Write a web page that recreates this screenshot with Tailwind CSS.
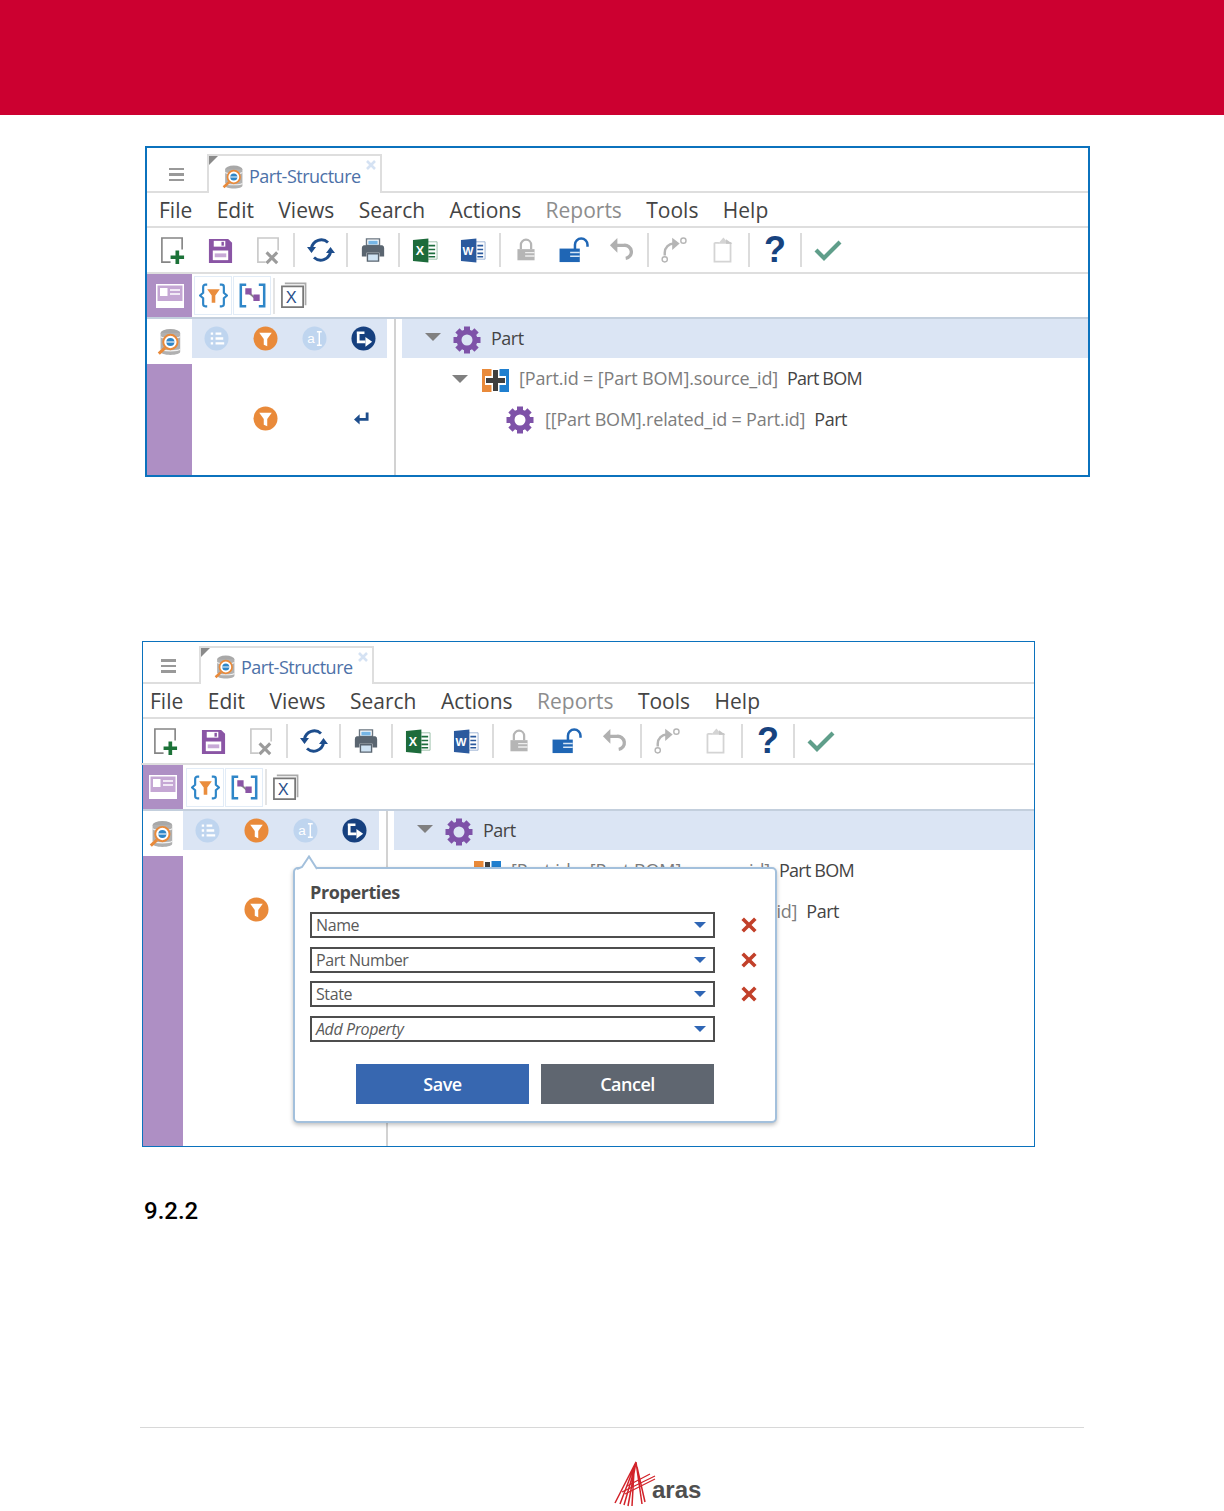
<!DOCTYPE html>
<html lang="en">
<head>
    <meta charset="UTF-8">
    <title>Part-Structure</title>
    <script src="https://cdn.jsdelivr.net/npm/@tailwindcss/browser@4"></script>
</head>
<body class="bg-white h-[1511px] overflow-hidden font-['Open_Sans',sans-serif]">
    <!-- Shared icons -->
    <svg width="0" height="0" class="absolute">
        <defs>
            <symbol id="i-new" viewBox="0 0 28 30"><path d="M12 27H3V2h21v12" fill="none" stroke="#858585" stroke-width="1.700"/><path d="M19 15v14M12 22h14" stroke="#1c7238" stroke-width="3.800"/></symbol>
            <symbol id="i-save" viewBox="0 0 28 30"><path d="M2 3h20l4 4v21H2z" fill="#8a55a5"/><path d="M7 5h12v6H7z" fill="#fff"/><path d="M15 6h2.500v4H15z" fill="#8a55a5"/><path d="M6 15h16v10H6z" fill="#fff"/><path d="M8 18h12v4H8z" fill="#c7a9d6"/></symbol>
            <symbol id="i-del" viewBox="0 0 28 30"><path d="M11 27H3V2h21v13" fill="none" stroke="#c9c9c9" stroke-width="1.700"/><path d="M12 17l11 11M23 17L12 28" stroke="#9b9b9b" stroke-width="3.200"/></symbol>
            <symbol id="i-refresh" viewBox="0 0 28 28"><path d="M4.500 12A10 10 0 0 1 21 6.500" fill="none" stroke="#1d4d8c" stroke-width="3"/><path d="M23.500 16A10 10 0 0 1 7 21.500" fill="none" stroke="#1d4d8c" stroke-width="3"/><path d="M0 11h9l-4.500 6zM19 17h9l-4.500-6z" fill="#1d4d8c"/></symbol>
            <symbol id="i-print" viewBox="0 0 28 28"><path d="M7 2h14v7H7z" fill="#fff" stroke="#6a7580" stroke-width="1.500"/><path d="M9 4h10v4H9z" fill="#76b6e6"/><path d="M4 9h20a3 3 0 0 1 2 3v9h-5v-4H7v4H2v-9a3 3 0 0 1 2-3z" fill="#5a6570"/><path d="M8 18h12v8H8z" fill="#cfe3f3" stroke="#5a6570" stroke-width="1.500"/></symbol>
            <symbol id="i-excel" viewBox="0 0 28 28"><path d="M14 5h12v18H14z" fill="#fff" stroke="#9cc0aa"/><path d="M17 9h7M17 13h7M17 17h7M17 20.500h7" stroke="#1e6e3e" stroke-width="1.700"/><path d="M1 3l16-1.500v25L1 25z" fill="#1d6b3b"/><text x="4" y="19" font-family="Liberation Sans" font-size="13" font-weight="700" fill="#fff">X</text></symbol>
            <symbol id="i-word" viewBox="0 0 28 28"><path d="M14 5h12v18H14z" fill="#fff" stroke="#9db4d4"/><path d="M18 9h6M18 13h6M18 17h6M18 20.500h6" stroke="#2b5a9e" stroke-width="1.700"/><path d="M1 3l16-1.500v25L1 25z" fill="#2b5a9e"/><text x="2.500" y="19" font-family="Liberation Sans" font-size="12" font-weight="700" fill="#fff">W</text></symbol>
            <symbol id="i-lock" viewBox="0 0 28 28"><path d="M8 13V8a6 6 0 0 1 12 0v5" fill="none" stroke="#b5b5b5" stroke-width="2.600"/><path d="M4 13h20v13H4z" fill="#b5b5b5"/><path d="M13 17h11M13 21h11" stroke="#eee" stroke-width="1.500"/></symbol>
            <symbol id="i-unlock" viewBox="0 0 32 28"><path d="M17 13V8a6.500 6.500 0 0 1 13 0v2" fill="none" stroke="#1f66b5" stroke-width="2.600"/><path d="M1 12h21v14H1z" fill="#1f66b5"/><path d="M12 16h10M12 20h10" stroke="#d6e6f6" stroke-width="1.500"/></symbol>
            <symbol id="i-undo" viewBox="0 0 28 28"><path d="M7 9h9a7 7 0 0 1 2 14" fill="none" stroke="#b0b0b0" stroke-width="3.600"/><path d="M9 1v16L1 9z" fill="#b0b0b0"/></symbol>
            <symbol id="i-redo" viewBox="0 0 32 30"><path d="M5 21v-3a10 10 0 0 1 10-10" fill="none" stroke="#b5b5b5" stroke-width="2.600"/><path d="M13 2l8 6-8 7z" fill="#b5b5b5"/><circle cx="25" cy="5" r="2.800" fill="none" stroke="#b5b5b5" stroke-width="1.500"/><circle cx="5" cy="25" r="2.800" fill="none" stroke="#b5b5b5" stroke-width="1.500"/></symbol>
            <symbol id="i-paste" viewBox="0 0 28 30"><path d="M5 7h5M18 7h5v21H5V7" fill="none" stroke="#d4d4d4" stroke-width="2"/><path d="M9 8l6-7 6 7z" fill="#d4d4d4"/><path d="M18 3l7 5h-7z" fill="#c4c4c4"/></symbol>
            <symbol id="i-check" viewBox="0 0 28 22"><path d="M2 11l8 8L26 3" fill="none" stroke="#5f9e8a" stroke-width="4.200"/></symbol>
            <symbol id="i-card" viewBox="0 0 28 26"><path d="M0 1h28v24H0z" fill="#fff"/><path d="M1.500 2.500h25V18h-25z" fill="#c5a7d4"/><path d="M4 5h7.500v8H4z" fill="#fff"/><path d="M14 7h10M14 11h10" stroke="#fff" stroke-width="1.700"/></symbol>
            <symbol id="i-filter-set" viewBox="0 0 32 30"><path d="M9 3H7a2.500 2.500 0 0 0-2.500 2.500V12L1 15l3.500 3v6.500A2.500 2.500 0 0 0 7 27h2M23 3h2a2.500 2.500 0 0 1 2.500 2.500V12l3.500 3-3.500 3v6.500A2.500 2.500 0 0 1 25 27h-2" fill="none" stroke="#2e86c8" stroke-width="2.400"/><path d="M9 8h14l-5 7v8h-4v-8z" fill="#ea8d3d"/></symbol>
            <symbol id="i-rel-set" viewBox="0 0 32 30"><path d="M9 3H3v24h6M23 3h6v24h-6" fill="none" stroke="#2e86c8" stroke-width="2.800"/><path d="M12 12l7 6" stroke="#888" stroke-width="2"/><path d="M8 7h7v7H8zM17 14h7v7h-7z" fill="#8a55a5"/></symbol>
            <symbol id="i-xml" viewBox="0 0 28 28"><path d="M5 1.500h21.500V24" fill="none" stroke="#aaa" stroke-width="1.800"/><path d="M2 4.500h22V26H2z" fill="#fff" stroke="#777" stroke-width="1.800"/><text x="6" y="22" font-family="Liberation Sans" font-size="17" fill="#2a4f8a">X</text></symbol>
            <symbol id="i-db" viewBox="0 0 28 30"><ellipse cx="15" cy="5" rx="11" ry="4.500" fill="#a8a8a8"/><path d="M4 5v21c0 2 4.500 3.500 11 3.500S26 28 26 26V5z" fill="#b0b0b0"/><path d="M4 9c2 2.500 20 2.500 22 0M4 23c2 2.500 20 2.500 22 0" stroke="#f2f2f2" stroke-width="1.400" fill="none"/><circle cx="15" cy="15" r="8" fill="#fff" stroke="#e98a3a" stroke-width="2.200"/><circle cx="15" cy="15" r="4.500" fill="#2e86c8"/><path d="M10.500 15h9" stroke="#fff" stroke-width="1.200"/><path d="M9 21.500l-7 6.500" stroke="#e98a3a" stroke-width="3.400"/></symbol>
            <symbol id="i-list" viewBox="0 0 26 26"><circle cx="13" cy="13" r="12.500" fill="#bfd5ef"/><path d="M7 8h2.500M12 8h6M7 13h2.500M12 13h8M7 18h2.500M12 18h9" stroke="#fff" stroke-width="2.400"/></symbol>
            <symbol id="i-funnel" viewBox="0 0 26 26"><circle cx="13" cy="13" r="12.500" fill="#e98a3a"/><path d="M6.500 7h13l-4.700 6.500V21l-3.600-1.500v-6z" fill="#fff"/></symbol>
            <symbol id="i-prop" viewBox="0 0 26 26"><circle cx="13" cy="13" r="12.500" fill="#bfd5ef"/><text x="5.500" y="18" font-family="Liberation Sans" font-size="14" fill="#fff">a</text><path d="M15.500 6h5M18 6v14M15.500 20h5" stroke="#fff" stroke-width="1.500"/></symbol>
            <symbol id="i-go" viewBox="0 0 26 26"><circle cx="13" cy="13" r="12.500" fill="#16407f"/><path d="M6 7h8M7.500 7v9.500H15" fill="none" stroke="#fff" stroke-width="2.800"/><path d="M15 11.500l7 5-7 5z" fill="#fff"/></symbol>
            <symbol id="i-return" viewBox="0 0 18 16"><path d="M15 1.500V9H5" fill="none" stroke="#1d4d8c" stroke-width="3"/><path d="M7 3.500V14.500L1 9z" fill="#1d4d8c"/></symbol>
            <symbol id="i-gear" viewBox="0 0 28 28">
                <circle cx="14" cy="14" r="8" fill="none" stroke="#7e52a8" stroke-width="5"/>
                <g fill="#7e52a8">
                    <rect x="11" y="0.500" width="6" height="6"/>
                    <rect x="11" y="21.500" width="6" height="6"/>
                    <rect x="0.500" y="11" width="6" height="6"/>
                    <rect x="21.500" y="11" width="6" height="6"/>
                    <rect x="11" y="0.500" width="6" height="6" transform="rotate(45 14 14)"/>
                    <rect x="11" y="21.500" width="6" height="6" transform="rotate(45 14 14)"/>
                    <rect x="0.500" y="11" width="6" height="6" transform="rotate(45 14 14)"/>
                    <rect x="21.500" y="11" width="6" height="6" transform="rotate(45 14 14)"/>
                </g>
            </symbol>
            <symbol id="i-rel" viewBox="0 0 27 23"><path d="M0 0h12v23H0z" fill="#e98a3a"/><path d="M15 0h12v23H15z" fill="#1f7fcf"/><path d="M3 7h21v9H3zM9.500 0h8v23h-8z" fill="#fff"/><path d="M4 9h19v5H4zM11 1h5v21h-5z" fill="#3f3f3f"/></symbol>
            <symbol id="i-x" viewBox="0 0 20 20"><path d="M3 3l14 14M17 3L3 17" stroke="#c2402a" stroke-width="4"/></symbol>
        </defs>
    </svg>

    <!-- Red header -->
    <div class="h-[115px] bg-[#cc0030]"></div>

    <!-- Panel 1 -->
    <div class="mt-[31px] ml-[145px] w-[945px] h-[331px] border-[2px] border-[#0b72bd] flex flex-col text-[#444]">
        <div class="h-[45px] shrink-0 flex items-end border-b-2 border-[#dedede]">
            <div class="w-[60px] h-[45px] flex flex-col justify-center gap-[3px] pl-[22px] pt-[12px]">
                <div class="w-[15px] h-[2.500px] bg-[#999]"></div>
                <div class="w-[15px] h-[2.500px] bg-[#999]"></div>
                <div class="w-[15px] h-[2.500px] bg-[#999]"></div>
            </div>
            <div class="relative w-[175px] h-[39px] -mb-[2px] border-2 border-b-0 border-[#dedede] bg-white flex items-center pl-[13px] gap-[5px] pt-[4px]">
                <div class="absolute left-0 top-0 w-0 h-0 border-t-[9px] border-r-[9px] border-t-[#8a8a8a] border-r-transparent"></div>
                <svg class="w-[22px] h-[24px]"><use href="#i-db"/></svg>
                <span class="text-[18px] text-[#4d71a8] tracking-[-0.5px] whitespace-nowrap">Part-Structure</span>
                <svg class="absolute right-[3px] top-[3px] w-[12px] h-[12px]" viewBox="0 0 12 12"><path d="M2 2l8 8M10 2l-8 8" stroke="#d5e2f3" stroke-width="2.600"/></svg>
            </div>
        </div>
        <div class="h-[35px] shrink-0 flex items-center pl-[12px] pt-[2px] gap-[24.4px] text-[21px] border-b-2 border-[#dedede]">
            <span>File</span><span>Edit</span><span>Views</span><span>Search</span><span>Actions</span><span class="text-[#8d8d8d]">Reports</span><span>Tools</span><span>Help</span>
        </div>
        <div class="h-[46px] shrink-0 flex items-center pl-[1px] border-b-2 border-[#dedede]">
            <div class="w-[48px] flex justify-center"><svg class="w-[27px] h-[29px]"><use href="#i-new"/></svg></div>
            <div class="w-[48px] flex justify-center"><svg class="w-[27px] h-[29px]"><use href="#i-save"/></svg></div>
            <div class="w-[48px] flex justify-center"><svg class="w-[27px] h-[29px]"><use href="#i-del"/></svg></div>
            <div class="w-[2px] h-[34px] bg-[#dcdcdc] mx-[1.25px]"></div>
            <div class="w-[48px] flex justify-center"><svg class="w-[28px] h-[28px]"><use href="#i-refresh"/></svg></div>
            <div class="w-[2px] h-[34px] bg-[#dcdcdc] mx-[1.25px]"></div>
            <div class="w-[48px] flex justify-center"><svg class="w-[26px] h-[26px]"><use href="#i-print"/></svg></div>
            <div class="w-[2px] h-[34px] bg-[#dcdcdc] mx-[1.25px]"></div>
            <div class="w-[48px] flex justify-center"><svg class="w-[27px] h-[27px]"><use href="#i-excel"/></svg></div>
            <div class="w-[48px] flex justify-center"><svg class="w-[27px] h-[27px]"><use href="#i-word"/></svg></div>
            <div class="w-[2px] h-[34px] bg-[#dcdcdc] mx-[1.25px]"></div>
            <div class="w-[48px] flex justify-center"><svg class="w-[24px] h-[26px]"><use href="#i-lock"/></svg></div>
            <div class="w-[48px] flex justify-center"><svg class="w-[32px] h-[27px]"><use href="#i-unlock"/></svg></div>
            <div class="w-[48px] flex justify-center"><svg class="w-[26px] h-[26px]"><use href="#i-undo"/></svg></div>
            <div class="w-[2px] h-[34px] bg-[#dcdcdc] mx-[1.25px]"></div>
            <div class="w-[48px] flex justify-center"><svg class="w-[30px] h-[28px]"><use href="#i-redo"/></svg></div>
            <div class="w-[48px] flex justify-center"><svg class="w-[25px] h-[28px]"><use href="#i-paste"/></svg></div>
            <div class="w-[2px] h-[34px] bg-[#dcdcdc] mx-[1.25px]"></div>
            <div class="w-[48px] flex justify-center font-['Liberation_Sans',sans-serif] font-bold text-[36px] leading-none text-[#17437f]">?</div>
            <div class="w-[2px] h-[34px] bg-[#dcdcdc] mx-[1.25px]"></div>
            <div class="w-[48px] flex justify-center"><svg class="w-[28px] h-[22px]"><use href="#i-check"/></svg></div>
        </div>
        <div class="h-[45px] shrink-0 flex items-center border-b-2 border-[#c3cfdd]">
            <div class="w-[45px] h-full bg-[#ae8fc4] flex items-center justify-center"><svg class="w-[28px] h-[26px]"><use href="#i-card"/></svg></div>
            <div class="ml-[2px] w-[38px] h-[39px] border border-[#e2ecf7] flex items-center justify-center"><svg class="w-[29px] h-[27px]"><use href="#i-filter-set"/></svg></div>
            <div class="ml-[1px] w-[38px] h-[39px] border border-[#e2ecf7] flex items-center justify-center"><svg class="w-[29px] h-[27px]"><use href="#i-rel-set"/></svg></div>
            <div class="ml-[2px] w-[2px] h-[36px] bg-[#e4e4e4]"></div>
            <div class="ml-[5px]"><svg class="w-[27px] h-[27px]"><use href="#i-xml"/></svg></div>
        </div>
        <div class="flex-1 flex min-h-0">
            <div class="w-[45px] shrink-0 flex flex-col">
                <div class="h-[45px] flex items-center justify-center"><svg class="w-[25px] h-[28px]"><use href="#i-db"/></svg></div>
                <div class="flex-1 bg-[#ae8fc4]"></div>
            </div>
            <div class="w-[195px] shrink-0">
                <div class="h-[39px] bg-[#dbe5f4] flex items-center pl-[12px] gap-[24px]">
                    <svg class="w-[25px] h-[25px]"><use href="#i-list"/></svg>
                    <svg class="w-[25px] h-[25px]"><use href="#i-funnel"/></svg>
                    <svg class="w-[25px] h-[25px]"><use href="#i-prop"/></svg>
                    <svg class="w-[25px] h-[25px]"><use href="#i-go"/></svg>
                </div>
                <div class="mt-[48px] flex items-center pl-[61px]">
                    <svg class="w-[25px] h-[25px]"><use href="#i-funnel"/></svg>
                    <svg class="ml-[75px] w-[17px] h-[15px]"><use href="#i-return"/></svg>
                </div>
            </div>
            <div class="w-[2px] ml-[7px] bg-[#d2d2d2]"></div>
            <div class="flex-1 ml-[6px] text-[18px] tracking-[-0.5px] whitespace-nowrap">
                <div class="h-[39px] bg-[#dbe5f4] flex items-center pl-[23px]">
                    <div class="w-0 h-0 border-x-[8px] border-t-[8px] border-x-transparent border-t-[#808080] -mt-[4px]"></div>
                    <svg class="ml-[12px] w-[28px] h-[28px] mt-[2px]"><use href="#i-gear"/></svg>
                    <span class="ml-[10px]">Part</span>
                </div>
                <div class="h-[41px] flex items-center pl-[50px]">
                    <div class="w-0 h-0 border-x-[8px] border-t-[8px] border-x-transparent border-t-[#808080]"></div>
                    <svg class="ml-[14px] w-[27px] h-[23px] mt-[3px]"><use href="#i-rel"/></svg>
                    <span class="ml-[10px] text-[#7d7d7d] tracking-[-0.15px]">[Part.id = [Part BOM].source_id]</span>
                    <span class="ml-[9px] tracking-[-0.8px]">Part BOM</span>
                </div>
                <div class="h-[41px] flex items-center pl-[104px]">
                    <svg class="w-[28px] h-[28px]"><use href="#i-gear"/></svg>
                    <span class="ml-[11px] text-[#7d7d7d] tracking-[-0.2px]">[[Part BOM].related_id = Part.id]</span>
                    <span class="ml-[9px]">Part</span>
                </div>
            </div>
        </div>
    </div>

    <!-- Panel 2 -->
    <div class="relative mt-[164px] ml-[142px] w-[893px] h-[506px] border border-[#0b72bd] flex flex-col text-[#444]">
        <div class="h-[42px] shrink-0 flex items-end border-b-2 border-[#dedede]">
            <div class="w-[56px] h-[42px] flex flex-col justify-center gap-[3px] pl-[18px] pt-[10px]">
                <div class="w-[15px] h-[2.500px] bg-[#999]"></div>
                <div class="w-[15px] h-[2.500px] bg-[#999]"></div>
                <div class="w-[15px] h-[2.500px] bg-[#999]"></div>
            </div>
            <div class="relative w-[175px] h-[38px] -mb-[2px] border-2 border-b-0 border-[#dedede] bg-white flex items-center pl-[13px] gap-[5px] pt-[2px]">
                <div class="absolute left-0 top-0 w-0 h-0 border-t-[9px] border-r-[9px] border-t-[#8a8a8a] border-r-transparent"></div>
                <svg class="w-[22px] h-[24px]"><use href="#i-db"/></svg>
                <span class="text-[18px] text-[#4d71a8] tracking-[-0.5px] whitespace-nowrap">Part-Structure</span>
                <svg class="absolute right-[3px] top-[3px] w-[12px] h-[12px]" viewBox="0 0 12 12"><path d="M2 2l8 8M10 2l-8 8" stroke="#d5e2f3" stroke-width="2.600"/></svg>
            </div>
        </div>
        <div class="h-[35px] shrink-0 flex items-center pl-[7px] pt-[2px] gap-[24.5px] text-[21px] border-b-2 border-[#dedede]">
            <span>File</span><span>Edit</span><span>Views</span><span>Search</span><span>Actions</span><span class="text-[#8d8d8d]">Reports</span><span>Tools</span><span>Help</span>
        </div>
        <div class="h-[46px] shrink-0 flex items-center -ml-[2px] border-b-2 border-[#dedede]">
            <div class="w-[48px] flex justify-center"><svg class="w-[27px] h-[29px]"><use href="#i-new"/></svg></div>
            <div class="w-[48px] flex justify-center"><svg class="w-[27px] h-[29px]"><use href="#i-save"/></svg></div>
            <div class="w-[48px] flex justify-center"><svg class="w-[27px] h-[29px]"><use href="#i-del"/></svg></div>
            <div class="w-[2px] h-[34px] bg-[#dcdcdc] mx-[1.25px]"></div>
            <div class="w-[48px] flex justify-center"><svg class="w-[28px] h-[28px]"><use href="#i-refresh"/></svg></div>
            <div class="w-[2px] h-[34px] bg-[#dcdcdc] mx-[1.25px]"></div>
            <div class="w-[48px] flex justify-center"><svg class="w-[26px] h-[26px]"><use href="#i-print"/></svg></div>
            <div class="w-[2px] h-[34px] bg-[#dcdcdc] mx-[1.25px]"></div>
            <div class="w-[48px] flex justify-center"><svg class="w-[27px] h-[27px]"><use href="#i-excel"/></svg></div>
            <div class="w-[48px] flex justify-center"><svg class="w-[27px] h-[27px]"><use href="#i-word"/></svg></div>
            <div class="w-[2px] h-[34px] bg-[#dcdcdc] mx-[1.25px]"></div>
            <div class="w-[48px] flex justify-center"><svg class="w-[24px] h-[26px]"><use href="#i-lock"/></svg></div>
            <div class="w-[48px] flex justify-center"><svg class="w-[32px] h-[27px]"><use href="#i-unlock"/></svg></div>
            <div class="w-[48px] flex justify-center"><svg class="w-[26px] h-[26px]"><use href="#i-undo"/></svg></div>
            <div class="w-[2px] h-[34px] bg-[#dcdcdc] mx-[1.25px]"></div>
            <div class="w-[48px] flex justify-center"><svg class="w-[30px] h-[28px]"><use href="#i-redo"/></svg></div>
            <div class="w-[48px] flex justify-center"><svg class="w-[25px] h-[28px]"><use href="#i-paste"/></svg></div>
            <div class="w-[2px] h-[34px] bg-[#dcdcdc] mx-[1.25px]"></div>
            <div class="w-[48px] flex justify-center font-['Liberation_Sans',sans-serif] font-bold text-[36px] leading-none text-[#17437f]">?</div>
            <div class="w-[2px] h-[34px] bg-[#dcdcdc] mx-[1.25px]"></div>
            <div class="w-[48px] flex justify-center"><svg class="w-[28px] h-[22px]"><use href="#i-check"/></svg></div>
        </div>
        <div class="h-[46px] shrink-0 flex items-center border-b-2 border-[#c3cfdd]">
            <div class="w-[40px] h-full bg-[#ae8fc4] flex items-center justify-center"><svg class="w-[28px] h-[26px]"><use href="#i-card"/></svg></div>
            <div class="ml-[3px] w-[38px] h-[39px] border border-[#e2ecf7] flex items-center justify-center"><svg class="w-[29px] h-[27px]"><use href="#i-filter-set"/></svg></div>
            <div class="ml-[1px] w-[38px] h-[39px] border border-[#e2ecf7] flex items-center justify-center"><svg class="w-[29px] h-[27px]"><use href="#i-rel-set"/></svg></div>
            <div class="ml-[2px] w-[2px] h-[36px] bg-[#e4e4e4]"></div>
            <div class="ml-[5px]"><svg class="w-[27px] h-[27px]"><use href="#i-xml"/></svg></div>
        </div>
        <div class="flex-1 flex min-h-0">
            <div class="w-[40px] shrink-0 flex flex-col">
                <div class="h-[45px] flex items-center justify-center -ml-[3px]"><svg class="w-[25px] h-[28px]"><use href="#i-db"/></svg></div>
                <div class="flex-1 bg-[#ae8fc4]"></div>
            </div>
            <div class="w-[196px] shrink-0">
                <div class="h-[39px] bg-[#dbe5f4] flex items-center pl-[12px] gap-[24px]">
                    <svg class="w-[25px] h-[25px]"><use href="#i-list"/></svg>
                    <svg class="w-[25px] h-[25px]"><use href="#i-funnel"/></svg>
                    <svg class="w-[25px] h-[25px]"><use href="#i-prop"/></svg>
                    <svg class="w-[25px] h-[25px]"><use href="#i-go"/></svg>
                </div>
                <div class="mt-[47px] flex items-center pl-[61px]">
                    <svg class="w-[25px] h-[25px]"><use href="#i-funnel"/></svg>
                </div>
            </div>
            <div class="w-[2px] ml-[7px] bg-[#d2d2d2]"></div>
            <div class="flex-1 ml-[6px] text-[18px] tracking-[-0.5px] whitespace-nowrap">
                <div class="h-[39px] bg-[#dbe5f4] flex items-center pl-[23px]">
                    <div class="w-0 h-0 border-x-[8px] border-t-[8px] border-x-transparent border-t-[#808080] -mt-[4px]"></div>
                    <svg class="ml-[12px] w-[28px] h-[28px] mt-[2px]"><use href="#i-gear"/></svg>
                    <span class="ml-[10px]">Part</span>
                </div>
                <div class="h-[41px] flex items-center pl-[50px]">
                    <div class="w-0 h-0 border-x-[8px] border-t-[8px] border-x-transparent border-t-[#808080]"></div>
                    <svg class="ml-[14px] w-[27px] h-[23px] mt-[3px]"><use href="#i-rel"/></svg>
                    <span class="ml-[10px] text-[#7d7d7d] tracking-[-0.15px]">[Part.id = [Part BOM].source_id]</span>
                    <span class="ml-[9px] tracking-[-0.8px]">Part BOM</span>
                </div>
                <div class="h-[41px] flex items-center pl-[104px]">
                    <svg class="w-[28px] h-[28px]"><use href="#i-gear"/></svg>
                    <span class="ml-[11px] text-[#7d7d7d] tracking-[-0.2px]">[[Part BOM].related_id = Part.id]</span>
                    <span class="ml-[9px]">Part</span>
                </div>
            </div>
        </div>

        <!-- Properties popover -->
        <div class="absolute left-[150px] top-[225px] w-[484px] h-[256px] bg-white border-2 border-[#a3c0dc] rounded-[5px] shadow-[0_2px_4px_rgba(0,0,0,0.25)] pl-[15px] pt-[10px]">
            <svg class="absolute left-[2px] -top-[14px] w-[24px] h-[16px]" viewBox="0 0 24 16"><path d="M0 16L12 1.500 20 14v2z" fill="#fff"/><path d="M0 14L5 12 12 1.500 20 14" fill="none" stroke="#a3c0dc" stroke-width="2"/></svg>
            <div class="text-[18px] font-bold text-[#4a4a4a] tracking-[-0.4px] leading-[26px]">Properties</div>
            <div class="mt-[7px] flex flex-col gap-[8.5px] text-[16px] tracking-[-0.4px] text-[#5a5a5a]">
                <div class="flex items-center">
                    <div class="w-[405px] h-[26px] border-2 border-[#4d4d4d] flex items-center justify-between pl-[4px] pr-[7px]"><span>Name</span><div class="w-0 h-0 border-x-[6px] border-t-[6px] border-x-transparent border-t-[#2f66b5]"></div></div>
                    <svg class="ml-[25px] w-[18px] h-[18px]"><use href="#i-x"/></svg>
                </div>
                <div class="flex items-center">
                    <div class="w-[405px] h-[26px] border-2 border-[#4d4d4d] flex items-center justify-between pl-[4px] pr-[7px]"><span>Part Number</span><div class="w-0 h-0 border-x-[6px] border-t-[6px] border-x-transparent border-t-[#2f66b5]"></div></div>
                    <svg class="ml-[25px] w-[18px] h-[18px]"><use href="#i-x"/></svg>
                </div>
                <div class="flex items-center">
                    <div class="w-[405px] h-[26px] border-2 border-[#4d4d4d] flex items-center justify-between pl-[4px] pr-[7px]"><span>State</span><div class="w-0 h-0 border-x-[6px] border-t-[6px] border-x-transparent border-t-[#2f66b5]"></div></div>
                    <svg class="ml-[25px] w-[18px] h-[18px]"><use href="#i-x"/></svg>
                </div>
                <div class="flex items-center">
                    <div class="w-[405px] h-[26px] border-2 border-[#4d4d4d] flex items-center justify-between pl-[4px] pr-[7px]"><span class="italic">Add Property</span><div class="w-0 h-0 border-x-[6px] border-t-[6px] border-x-transparent border-t-[#2f66b5]"></div></div>
                </div>
            </div>
            <div class="mt-[22px] ml-[46px] flex gap-[12px] text-[18px] font-semibold tracking-[-0.5px] text-white">
                <div class="w-[173px] h-[40px] pt-[2px] bg-[#3767b0] flex items-center justify-center">Save</div>
                <div class="w-[173px] h-[40px] pt-[2px] bg-[#5f6670] flex items-center justify-center">Cancel</div>
            </div>
        </div>
    </div>

    <!-- Section number -->
    <div class="mt-[50px] ml-[144px] font-['Roboto',sans-serif] font-medium text-[24px] leading-[28px] text-black">9.2.2</div>

    <!-- Footer -->
    <div class="mt-[202px] ml-[140px] w-[944px] border-t border-[#d8d8d8] h-[84px]">
        <div class="flex items-end mt-[33px] ml-[474px]">
            <svg class="w-[42px] h-[46px]" viewBox="0 0 42 46">
                <path d="M22 1L1 42M22 1L6 43M22 1L14 45M21 6L10 44M22 1L28 43M23 6L31 41M20 10L18 45" stroke="#d2232a" stroke-width="1.500" fill="none"/>
                <path d="M8 31L41 15M11 33L41 18M13 25L36 13" stroke="#d2232a" stroke-width="1.200" fill="none"/>
            </svg>
            <span class="-ml-[4px] mb-[3px] font-['Liberation_Sans',sans-serif] font-bold text-[24px] leading-[28px] text-[#4f4f4f]">aras</span>
        </div>
    </div>
</body>
</html>
